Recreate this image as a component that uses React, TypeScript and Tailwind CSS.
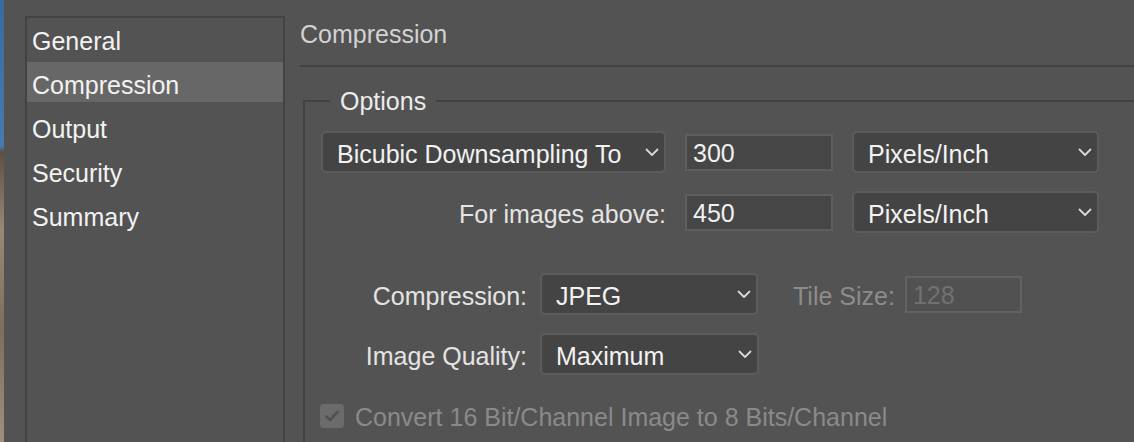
import React from "react";

const Chevron = () => (
  <svg width="14" height="9" viewBox="0 0 14 9" className="shrink-0">
    <path
      d="M1.5 1.5 L7 7 L12.5 1.5"
      fill="none"
      stroke="#d8d8d8"
      strokeWidth="1.8"
      strokeLinecap="round"
      strokeLinejoin="round"
    />
  </svg>
);

const Select: React.FC<{ value: string; className: string }> = ({
  value,
  className,
}) => (
  <div
    className={
      "flex h-[42px] shrink-0 items-center justify-between rounded-[5px] border-2 border-[#5c5c5c] bg-[#444444] pl-[14px] pr-[5px] leading-[28px] text-[#f2f2f2] " +
      className
    }
  >
    <span className="pt-[3px]">{value}</span>
    <Chevron />
  </div>
);

const NumberInput: React.FC<{ value: string; disabled?: boolean; className: string }> = ({
  value,
  disabled,
  className,
}) => (
  <div
    className={
      "flex h-[37px] shrink-0 items-center border-2 pl-[6px] pt-[2px] leading-[28px] " +
      (disabled
        ? "border-[#626262] bg-[#515151] text-[#717171] "
        : "border-[#5e5e5e] bg-[#464646] text-[#f0f0f0] ") +
      className
    }
  >
    {value}
  </div>
);

const sections = ["General", "Compression", "Output", "Security", "Summary"];

export default function App() {
  const selected = "Compression";

  return (
    <div className="flex h-[442px] w-[1134px] overflow-hidden bg-[#535353] font-['Liberation_Sans',Arial,sans-serif] text-[25px]">
      {/* sliver of the desktop photo behind the dialog */}
      <div className="w-[4px] shrink-0 bg-[linear-gradient(to_bottom,#3b6aa3_0px,#4a79b2_146px,#5e4f42_152px,#9a8877_230px,#7f6d5d_330px,#a08f7f_442px)]" />

      {/* sidebar */}
      <div className="ml-[21px] mt-[16px] w-[260px] shrink-0 border-x-2 border-t-2 border-[#434343]">
        {sections.map((s) => (
          <div
            key={s}
            className={
              "mb-[4px] h-[40px] pl-[5px] leading-[47px] text-[#f2f2f2] " +
              (s === selected ? "bg-[#676767]" : "")
            }
          >
            {s}
          </div>
        ))}
      </div>

      {/* content */}
      <div className="flex min-w-0 flex-1 flex-col pl-[15px]">
        <div className="flex h-[67px] shrink-0 items-center border-b-2 border-[#424242] pt-[2px] leading-[28px] text-[#d2d2d2]">
          Compression
        </div>

        <fieldset className="ml-[3px] mt-[20px] flex-1 border-l-2 border-t-2 border-[#424242]">
          <legend className="ml-[25px] px-[10px] leading-[28px] text-[#ececec]">
            Options
          </legend>

          <div className="ml-[16px] mt-[16px] flex items-center">
            <Select value="Bicubic Downsampling To" className="w-[345px]" />
            <NumberInput value="300" className="ml-[19px] w-[148px]" />
            <Select value="Pixels/Inch" className="ml-[19px] w-[247px]" />
          </div>

          <div className="ml-[16px] mt-[18px] flex items-center">
            <div className="w-[345px] shrink-0 pt-[3px] text-right leading-[28px] text-[#e4e4e4]">
              For images above:
            </div>
            <NumberInput value="450" className="ml-[19px] w-[148px]" />
            <Select value="Pixels/Inch" className="ml-[19px] w-[247px]" />
          </div>

          <div className="ml-[16px] mt-[40px] flex items-center">
            <div className="w-[206px] shrink-0 pt-[3px] text-right leading-[28px] text-[#e4e4e4]">
              Compression:
            </div>
            <Select value="JPEG" className="ml-[13px] w-[218px]" />
            <div className="ml-[35px] shrink-0 pt-[3px] leading-[28px] text-[#8c8c8c]">
              Tile Size:
            </div>
            <NumberInput value="128" disabled className="ml-[10px] w-[117px]" />
          </div>

          <div className="ml-[16px] mt-[18px] flex items-center">
            <div className="w-[206px] shrink-0 pt-[3px] text-right leading-[28px] text-[#e4e4e4]">
              Image Quality:
            </div>
            <Select value="Maximum" className="ml-[13px] w-[219px]" />
          </div>

          <div className="ml-[15px] mt-[25px] flex items-center">
            <div className="flex h-[24px] w-[24px] shrink-0 items-center justify-center rounded-[4px] bg-[#6b6b6b]">
              <svg width="16" height="14" viewBox="0 0 16 14">
                <path
                  d="M2.5 7.5 L6 11 L13.5 3"
                  fill="none"
                  stroke="#525252"
                  strokeWidth="2.8"
                  strokeLinecap="round"
                  strokeLinejoin="round"
                />
              </svg>
            </div>
            <span className="ml-[11px] whitespace-nowrap pt-[3px] leading-[28px] text-[#8a8a8a]">
              Convert 16 Bit/Channel Image to 8 Bits/Channel
            </span>
          </div>
        </fieldset>
      </div>
    </div>
  );
}
